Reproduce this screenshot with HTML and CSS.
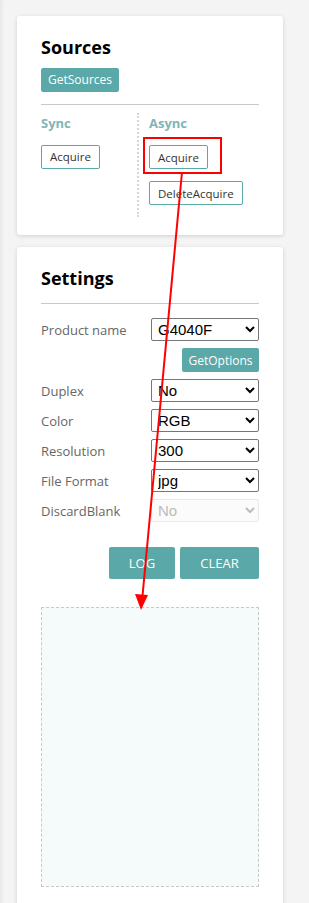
FILE: index.html
```html
<!DOCTYPE html>
<html lang="en">
<head>
  <meta charset="UTF-8">
  <meta name="viewport" content="width=device-width, initial-scale=1.0">
  <title>Scanner Demo</title>
  <link rel="stylesheet" href="styles.css">
</head>
<body>
  <div class="page">
    <div class="card">
      <h2>Sources</h2>
      <button class="btn-solid btn-small">GetSources</button>
      <hr>
      <div class="modes">
        <div class="mode">
          <h4>Sync</h4>
          <button class="btn-outline">Acquire</button>
        </div>
        <div class="mode mode-async">
          <h4>Async</h4>
          <div class="highlight">
            <button class="btn-outline">Acquire</button>
          </div>
          <button class="btn-outline btn-delete">DeleteAcquire</button>
        </div>
      </div>
    </div>

    <div class="card card-settings">
      <h2>Settings</h2>
      <hr>
      <div class="form">
        <label>Product name</label>
        <select><option>G4040F</option></select>
        <span></span>
        <button class="btn-solid btn-small btn-right">GetOptions</button>
        <label>Duplex</label>
        <select><option>No</option></select>
        <label>Color</label>
        <select><option>RGB</option></select>
        <label>Resolution</label>
        <select><option>300</option></select>
        <label>File Format</label>
        <select><option>jpg</option></select>
        <label>DiscardBlank</label>
        <select disabled><option>No</option></select>
      </div>
      <div class="actions">
        <button class="btn-solid btn-big btn-log">LOG</button>
        <button class="btn-solid btn-big btn-clear">CLEAR</button>
      </div>
      <div class="log"></div>
    </div>
  </div>

  <svg class="arrow" width="309" height="903" viewBox="0 0 309 903">
    <line x1="182" y1="172" x2="142.5" y2="596" stroke="#ff0000" stroke-width="2"/>
    <polygon points="135,594 148,595 141,610" fill="#ff0000"/>
  </svg>
</body>
</html>
```

FILE: styles.css
```css
body {
  margin: 0;
  background-color: #f4f4f4;
  font-family: "Open Sans", "Noto Sans", sans-serif;
  color: #333;
  box-shadow: inset 5px 0 5px -4px rgba(0, 0, 0, 0.08);
  min-height: 100vh;
}

.page {
  padding: 16px 26px 0 17px;
  display: flex;
  flex-direction: column;
  gap: 12px;
}

.card {
  background-color: #fff;
  border-radius: 3px;
  box-shadow: 0 1px 4px rgba(0, 0, 0, 0.15);
  padding: 20px 24px 18px;
}

.card h2 {
  margin: 0 0 9px;
  font-size: 18px;
  font-weight: 700;
  color: #000;
  line-height: 22px;
}

.card hr {
  border: none;
  border-top: 1px solid #c8c8c8;
  margin: 12px 0 8px;
}

button {
  font-family: inherit;
  cursor: pointer;
}

.btn-solid {
  background-color: #5ba8a8;
  color: #fff;
  border: none;
  border-radius: 2px;
}

.btn-small {
  font-size: 12px;
  height: 24px;
  padding: 0 7px;
}

.btn-outline {
  display: block;
  background-color: #fff;
  color: #333;
  border: 1px solid #5ba8a8;
  border-radius: 2px;
  font-size: 11.5px;
  height: 24px;
  padding: 0 8px;
}

.modes {
  display: flex;
}

.mode {
  width: 96px;
  padding-top: 2px;
}

.mode h4 {
  margin: 0 0 14px;
  font-size: 13px;
  font-weight: 700;
  color: #7fb5b8;
  line-height: 16px;
}

.mode-async {
  border-left: 2px dotted #d6d6d6;
  padding-left: 10px;
  padding-bottom: 12px;
}

.highlight {
  display: inline-block;
  border: 2px solid #ff0000;
  padding: 6px 12px 3px 4px;
  margin: -8px 0 -5px -6px;
}

.btn-delete {
  margin-top: 12px;
}

.card-settings {
  padding-top: 20px;
  min-height: 620px;
}

.card-settings hr {
  margin: 14px 0 14px;
}

.form {
  display: grid;
  grid-template-columns: 110px 108px;
  row-gap: 7px;
  align-items: center;
}

.form label {
  font-size: 13px;
  color: #666;
}

.form select {
  height: 23px;
  font-family: Arial, "Liberation Sans", sans-serif;
  font-size: 15px;
  color: #000;
  border: 1px solid #767676;
  border-radius: 2px;
  background-color: #fff;
  padding: 0 0 0 2px;
}

.form select:disabled {
  color: #a0a0a0;
  background-color: #fafafa;
  border-color: #e0e0e0;
}

.btn-right {
  justify-self: end;
  width: 77px;
  padding: 0;
}

.actions {
  display: flex;
  justify-content: flex-end;
  gap: 5px;
  margin-top: 25px;
}

.btn-big {
  font-size: 13px;
  height: 32px;
}

.btn-log {
  width: 66px;
}

.btn-clear {
  width: 79px;
}

.log {
  margin-top: 28px;
  height: 278px;
  background-color: #f5fafa;
  border: 1px dashed #c8c8c8;
}

.arrow {
  position: absolute;
  top: 0;
  left: 0;
  pointer-events: none;
}
```
